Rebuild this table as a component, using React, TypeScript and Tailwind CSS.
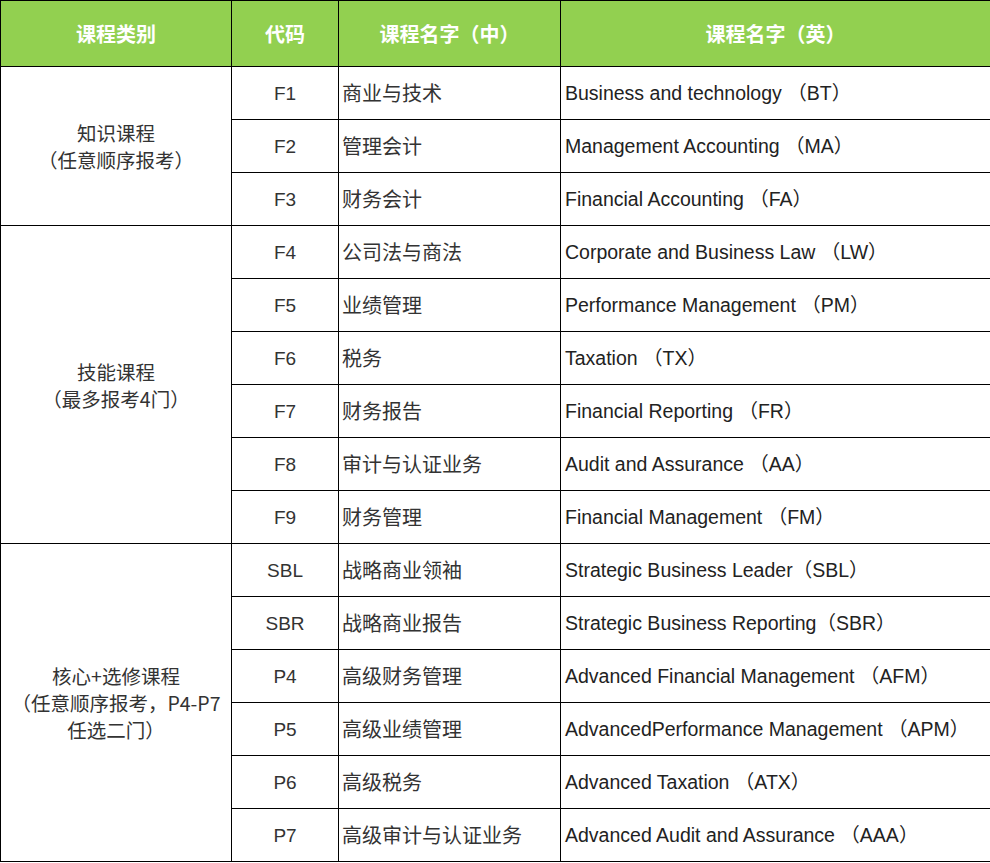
const groups = [
  {
    title: ['知识课程', '（任意顺序报考）'],
    rows: [
      ['F1', '商业与技术', 'Business and technology （BT）'],
      ['F2', '管理会计', 'Management Accounting （MA）'],
      ['F3', '财务会计', 'Financial Accounting （FA）'],
    ],
  },
  {
    title: ['技能课程', '（最多报考4门）'],
    rows: [
      ['F4', '公司法与商法', 'Corporate and Business Law （LW）'],
      ['F5', '业绩管理', 'Performance Management （PM）'],
      ['F6', '税务', 'Taxation （TX）'],
      ['F7', '财务报告', 'Financial Reporting （FR）'],
      ['F8', '审计与认证业务', 'Audit and Assurance （AA）'],
      ['F9', '财务管理', 'Financial Management （FM）'],
    ],
  },
  {
    title: ['核心+选修课程', '（任意顺序报考，P4-P7', '任选二门）'],
    rows: [
      ['SBL', '战略商业领袖', 'Strategic Business Leader（SBL）'],
      ['SBR', '战略商业报告', 'Strategic Business Reporting（SBR）'],
      ['P4', '高级财务管理', 'Advanced Financial Management （AFM）'],
      ['P5', '高级业绩管理', 'AdvancedPerformance Management （APM）'],
      ['P6', '高级税务', 'Advanced Taxation （ATX）'],
      ['P7', '高级审计与认证业务', 'Advanced Audit and Assurance （AAA）'],
    ],
  },
];

const cjk = { fontFamily: '"Noto Sans CJK SC", "Noto Sans", sans-serif' };
const latin = { fontFamily: '"Liberation Sans", "Noto Sans CJK SC", sans-serif' };

export default function App() {
  return (
    <div className="w-[990px] h-[863px] bg-white overflow-hidden">
      <table className="border-collapse table-fixed w-[990px] text-[#333333]">
        <colgroup>
          <col className="w-[231px]" />
          <col className="w-[107px]" />
          <col className="w-[222px]" />
          <col className="w-[430px]" />
        </colgroup>
        <thead>
          <tr className="h-[66px] bg-[#92d050] text-white">
            {['课程类别', '代码', '课程名字（中）', '课程名字（英）'].map((h) => (
              <th
                key={h}
                className="border border-black text-center font-bold text-[20px]"
                style={cjk}
              >
                {h}
              </th>
            ))}
          </tr>
        </thead>
        <tbody>
          {groups.map((g) =>
            g.rows.map((r, i) => (
              <tr key={r[0]} className="h-[53px]">
                {i === 0 && (
                  <td
                    rowSpan={g.rows.length}
                    className="border border-black text-center text-[19.5px] leading-[27px]"
                    style={cjk}
                  >
                    {g.title.map((t) => (
                      <div key={t}>{t}</div>
                    ))}
                  </td>
                )}
                <td className="border border-black text-center text-[19px] pt-[2px]" style={latin}>
                  {r[0]}
                </td>
                <td className="border border-black pl-[3px] text-[20px]" style={cjk}>
                  {r[1]}
                </td>
                <td className="border border-black pl-[4px] text-[19.5px] pt-[2px] text-[#222222]" style={latin}>
                  {r[2]}
                </td>
              </tr>
            ))
          )}
        </tbody>
      </table>
    </div>
  );
}
